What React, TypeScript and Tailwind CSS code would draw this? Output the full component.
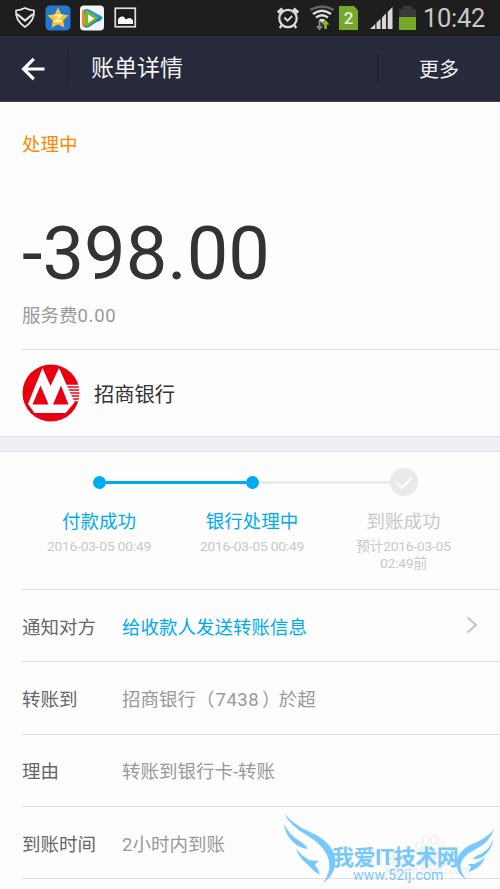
import type { ReactNode } from 'react';
import clsx from 'clsx';

interface Step {
  title: string;
  lines: string[];
  done: boolean;
}

interface DetailRowProps {
  label: string;
  children: ReactNode;
  link?: boolean;
}

const steps: Step[] = [
  { title: '付款成功', lines: ['2016-03-05 00:49'], done: true },
  { title: '银行处理中', lines: ['2016-03-05 00:49'], done: true },
  { title: '到账成功', lines: ['预计2016-03-05', '02:49前'], done: false },
];

function StatusBar() {
  return (
    <div className="flex h-9 items-center bg-[#1e1e1e]">
      <svg className="ml-[14px] h-6 w-[22px]" viewBox="0 0 22 24" fill="none" stroke="#e8e8e8" strokeWidth="1.7">
        <path d="M2 4.5Q7 4 11 2Q15 4 20 4.5Q21 14 11 21Q1 14 2 4.5Z" />
        <path d="M3 8l8 6.500 8-6.500" strokeWidth="2.200" />
      </svg>
      <svg className="ml-[9px] h-[26px] w-[26px]" viewBox="0 0 26 26">
        <rect x="0.500" y="0.500" width="25" height="25" rx="4.500" fill="#2378cf" />
        <path d="M13 2.500l3.200 6.700 7.300 1-5.300 5.200 1.300 7.400-6.500-3.500-6.500 3.500 1.300-7.400L2.500 10.200l7.300-1z" fill="#fbc52f" />
        <path d="M9.500 10.500h6.500l-5.500 5.500h6.500" fill="none" stroke="#fff0bd" strokeWidth="1.800" />
      </svg>
      <svg className="ml-2 h-[26px] w-[26px]" viewBox="0 0 26 26">
        <rect x="1" y="0.500" width="24" height="25" rx="4" fill="#f4f5f6" />
        <path d="M3 6Q3 4 6 5L11 9 8 21 5 22Q3 22 3 19Z" fill="#f58a24" />
        <path d="M5 5Q7 3 11 5L22 11Q25 13 22 15L19 17 5 9Z" fill="#2793df" />
        <path d="M22 14L10 22Q6 24 5 21L7 18 17 12Z" fill="#2376c4" />
        <path d="M6 6Q8 5 10 6.500L18 12Q20 13 18 14.500L9 21Q6 22 6 19Z" fill="#75b92d" />
        <path d="M9 9.500L15.500 13.500 9 18Z" fill="#fff" />
      </svg>
      <svg className="ml-[9px] h-[22px] w-6" viewBox="0 0 24 22">
        <rect x="1.250" y="1.250" width="20" height="18.500" fill="none" stroke="#dedede" strokeWidth="1.700" />
        <path d="M4 17v-5l2.500-2.200 3-.3 2.500 3 2-1.200h3l2 2.200v3.500z" fill="#fff" />
      </svg>

      <svg className="ml-auto h-6 w-6" viewBox="0 0 24 24" fill="none" stroke="#dcdcdc">
        <circle cx="12" cy="12.500" r="8.700" strokeWidth="2.200" />
        <path d="M8.300 11.500l3.200 3.200 4.700-4.700" strokeWidth="1.800" />
        <path d="M2 6.700L6.500 2.700M17.500 2.700L22 6.700" strokeWidth="3.500" />
        <path d="M6 19l-2.300 3M18 19l2.300 3" strokeWidth="2.200" />
      </svg>
      <svg className="ml-[10px] h-[26px] w-6" viewBox="0 0 24 26" fill="none">
        <path d="M0.500 5Q12-2 23.500 5" stroke="#666" strokeWidth="2.500" />
        <path d="M3 9Q12 2.500 21 9" stroke="#dedede" strokeWidth="2.500" />
        <path d="M6 12.500Q12 8 18 12.500" stroke="#dedede" strokeWidth="2.300" />
        <path d="M8.700 15Q12 12.500 15.300 15L12 18Z" fill="#dedede" />
        <path d="M8.500 16v5H6l3.500 4.500 3.500-4.500H10.500v-5z" fill="#888" />
        <path d="M14.200 24v-4.500h-2.700L15.500 15l4 4.500h-2.700V24z" fill="#83bf25" />
      </svg>
      <div className="ml-[5px] flex h-[24px] w-[19px] items-center justify-center bg-[#77a82b] pt-px font-['Roboto'] text-[17px] font-medium leading-none text-[#eee] [clip-path:polygon(0_0,79%_0,100%_18%,100%_100%,0_100%)]">
        2
      </div>
      <svg className="ml-3 h-[22px] w-[23px]" viewBox="0 0 23 22">
        <path d="M0 22l5.300-5v5zM6.500 15.700l4-4V22h-4zM12 10.500l4-4V22h-4zM17.700 5L22.500 0v22h-4.800z" fill="#d8d8d8" />
      </svg>
      <svg className="ml-[6px] h-6 w-[17px]" viewBox="0 0 17 24">
        <path d="M0 3h4V0h9v3h4v8H0z" fill="#393939" />
        <path d="M0 11h17v13H0z" fill="#77a82b" />
      </svg>
      <span className="ml-[7px] mr-[14px] w-[63px] whitespace-nowrap text-[25.500px] leading-9 tracking-[-0.300px] text-[#c9c9c9]">
        10:42
      </span>
    </div>
  );
}

function Header() {
  return (
    <header className="flex h-[66px] items-center border-b border-[#3f4152] bg-[#272a3a] text-[#f3f3f3]">
      <svg className="ml-[21px] h-6 w-6" viewBox="0 0 24 24" fill="none" stroke="#fff" strokeWidth="3.200">
        <path d="M23.500 12H2.500M12.800 1.800L2.600 12l10.200 10.200" />
      </svg>
      <div className="ml-[22px] h-8 w-px bg-[#1e202d]" />
      <h1 className="ml-[23px] text-[23px] leading-8">账单详情</h1>
      <div className="ml-auto h-8 w-px bg-[#1e202d]" />
      <button className="w-[122px] pt-[2px] text-center text-[20px] leading-8">更多</button>
    </header>
  );
}

function BankLogo() {
  return (
    <svg className="h-[58px] w-[58px]" viewBox="0 0 58 58">
      <circle cx="29" cy="29" r="28.500" fill="#e80012" />
      <path d="M20.500 4L6 40l6.500 9h31l9-10.500L37 4l-8.500 18z" fill="#fff" />
      <path d="M18.500 21.500L10.500 40.500h16zM39 21.500L31 40.500h15.500z" fill="#e80012" />
      <path
        d="M45 21.500h13M46 24.500h12.500M47 27.500h11.500M48.300 30.500h10M49.500 33.500h9M51 36.500h6.500"
        stroke="#fff"
        strokeWidth="1.400"
      />
    </svg>
  );
}

function Progress() {
  return (
    <section className="grid h-[137px] grid-cols-[153px_153px_150px] pl-[22.500px] pt-[15px]">
      {steps.map((step, i) => (
        <div key={step.title} className="flex flex-col items-center">
          <div className="grid h-[30px] w-full grid-cols-[1fr_auto_1fr] items-center">
            <span className={clsx('h-[3px]', i === 1 && 'bg-[#00aaf2]', i === 2 && 'bg-[#e9ebeb]')} />
            {step.done ? (
              <span className="h-[13px] w-[13px] rounded-full bg-[#00aaf2]" />
            ) : (
              <svg className="h-7 w-7" viewBox="0 0 28 28">
                <circle cx="14" cy="14" r="14" fill="#e9ebeb" />
                <path d="M6.500 14.500l5.500 5.500L22 9.500" fill="none" stroke="#fff" strokeWidth="2" />
              </svg>
            )}
            <span className={clsx('h-[3px]', i === 0 && 'bg-[#00aaf2]', i === 1 && 'bg-[#e9ebeb]')} />
          </div>
          <p className={clsx('mt-[13px] text-[18.500px] leading-6', step.done ? 'text-[#00aaf2]' : 'text-[#c8c8c8]')}>
            {step.title}
          </p>
          <div className="mt-1 text-center text-[13.700px] leading-[17px] tracking-[-0.150px] text-[#c8c8c8]">
            {step.lines.map((line) => (
              <p key={line}>{line}</p>
            ))}
          </div>
        </div>
      ))}
    </section>
  );
}

function DetailRow({ label, children, link }: DetailRowProps) {
  return (
    <div className="ml-[22px] flex h-[72.300px] items-center border-t border-[#dedede] pt-[6px] text-[18.500px]">
      <dt className="w-[100px] text-[#666]">{label}</dt>
      <dd className={clsx('flex-1', link ? 'text-[#00aaf2]' : 'text-[#999]')}>{children}</dd>
      {link && (
        <svg className="mb-2 mr-[22px] h-[18px] w-3" viewBox="0 0 12 18" fill="none" stroke="#c4c4c4" strokeWidth="2">
          <path d="M1.500 1.500L10 9l-8.500 7.500" />
        </svg>
      )}
    </div>
  );
}

function Watermark() {
  return (
    <div className="absolute left-[270px] top-[800px] h-[89px] w-[230px]">
      <p className="absolute left-[114px] top-[46px] whitespace-nowrap text-[20px] font-bold leading-6 text-[#efefef]">Bai 经验</p>
      <p className="absolute left-[115px] top-[65px] whitespace-nowrap text-[10.500px] leading-3 text-[#ebebeb]">jingyan.baidu.com</p>
      <svg className="absolute inset-0" width="230" height="89" viewBox="0 0 230 89">
        <g fill="none" stroke="#eaeaea" strokeWidth="1.200">
          <ellipse cx="149" cy="46" rx="3" ry="4" />
          <ellipse cx="156" cy="40" rx="3" ry="4.500" />
          <ellipse cx="164" cy="40" rx="3" ry="4.500" />
          <ellipse cx="171" cy="46" rx="3" ry="4" />
          <path d="M160 46Q165 49 169 54Q168 59 160 57Q152 59 151 54Q155 49 160 46Z" />
        </g>
        <g fill="#78c9fb">
          <path d="M14 13Q22 24 40 32Q62 42 65 57Q67 74 53 83Q61 72 59 62Q57 48 38 36Q20 26 14 13Z" />
          <path d="M14 24Q19 34 28 40Q35 44 38 49Q29 48 23 42Q15 34 14 24Z" />
          <path d="M26 49Q32 56 39 60L49 61Q46 63 45 65Q49 70 50 75Q43 71 38 65Q29 58 26 49Z" />
          <path d="M224 29Q220 42 206 49Q192 56 190.500 65Q190 73 197 80Q185 73 187 60Q189 49 205 43Q218 37 224 29Z" />
          <path d="M223 39Q220 49 211 54Q205 56 203 59Q211 60 217 53Q223 46 223 39Z" />
          <path d="M215 57Q210 62 204 64L198 64 201 67Q199 70 199 72L207 68Q213 64 215 57Z" />
        </g>
      </svg>
      <p className="absolute left-[62px] top-[46px] whitespace-nowrap text-[22px] font-bold leading-6 tracking-[-0.500px] text-[#78c9fb]">
        我爱IT技术网
      </p>
      <p className="absolute left-[83px] top-[67px] whitespace-nowrap text-[14px] leading-4 tracking-[0.200px] text-[#78c9fb]">
        www.52ij.com
      </p>
    </div>
  );
}

export default function App() {
  return (
    <main className="relative h-[889px] w-[500px] overflow-hidden bg-[#fdfdfd] font-['Roboto','Noto_Sans_CJK_SC',sans-serif]">
      <StatusBar />
      <Header />

      <section className="ml-[22px] h-[247px] pt-[31px]">
        <p className="text-[18.500px] leading-6 text-[#ff8800]">处理中</p>
        <p className="mt-[53px] text-[74px] leading-[88px] text-[#333]">-398.00</p>
        <p className="mt-[6px] text-[18.500px] leading-6 text-[#999]">
          服务费<span className="tracking-[0.700px]">0.00</span>
        </p>
      </section>

      <section className="ml-[22px] flex h-[87px] items-center border-t border-[#dedede]">
        <BankLogo />
        <span className="ml-[14px] pt-1 text-[20.300px] text-[#333]">招商银行</span>
      </section>
      <div className="h-4 border-y border-[#dedee0] bg-[#eeeef4]" />

      <Progress />

      <dl>
        <DetailRow label="通知对方" link>
          给收款人发送转账信息
        </DetailRow>
        <DetailRow label="转账到">
          招商银行（<span className="ml-px mr-[3px] tracking-[0.500px]">7438</span>
          <span className="mr-[-2px]">）</span>於超
        </DetailRow>
        <DetailRow label="理由">转账到银行卡-转账</DetailRow>
        <DetailRow label="到账时间">2小时内到账</DetailRow>
      </dl>
      <div className="ml-[22px] border-t border-[#dedede]" />

      <Watermark />
    </main>
  );
}
